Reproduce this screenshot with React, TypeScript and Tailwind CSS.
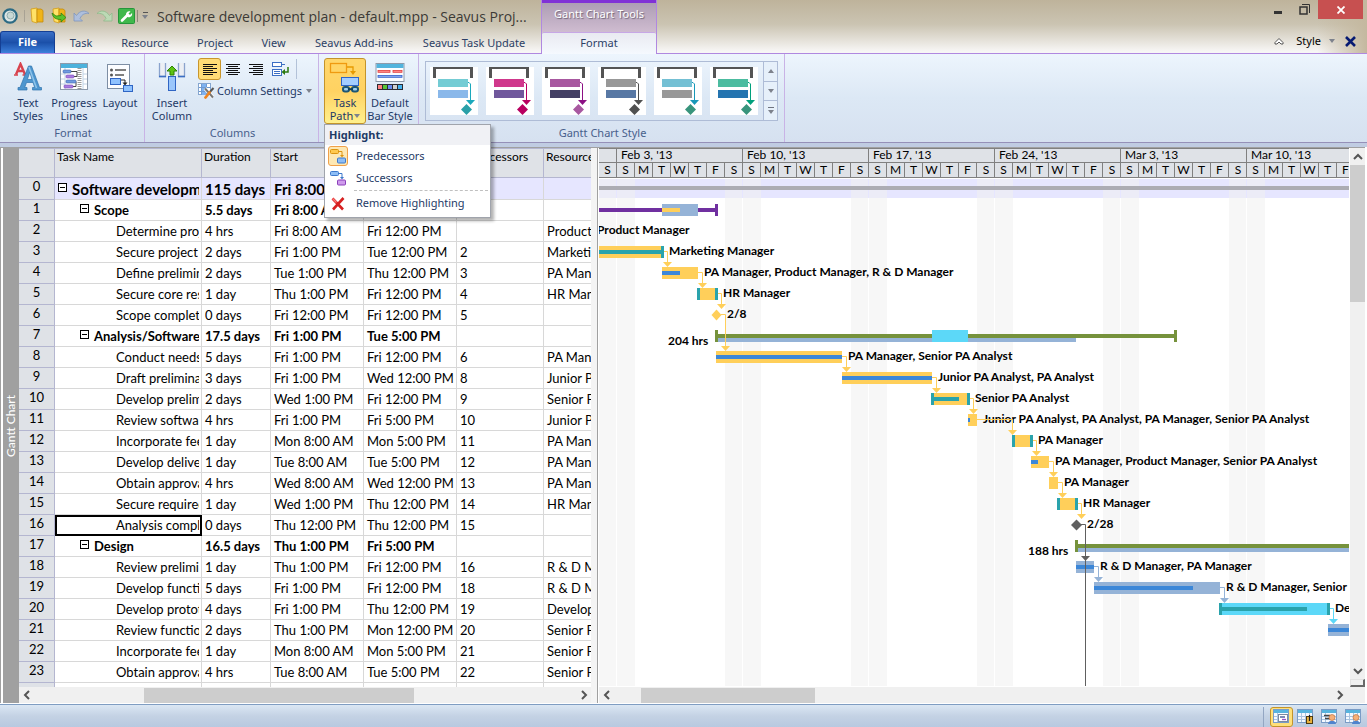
import React from "react";

/* ---------- data ---------- */

type Task = {
  level: 0 | 1 | 2;
  name: string;
  duration: string;
  start: string;
  finish: string;
  pred: string;
  res: string;
};

const t = (level: 0 | 1 | 2, name: string, duration: string, start: string, finish: string, pred = "", res = ""): Task => ({
  level, name, duration, start, finish, pred, res,
});

const tasks: Task[] = [
  t(0, "Software development", "115 days", "Fri 8:00 AM", ""),
  t(1, "Scope", "5.5 days", "Fri 8:00 AM", ""),
  t(2, "Determine project scope", "4 hrs", "Fri 8:00 AM", "Fri 12:00 PM", "", "Product Manager"),
  t(2, "Secure project sponsorship", "2 days", "Fri 1:00 PM", "Tue 12:00 PM", "2", "Marketing Manager"),
  t(2, "Define preliminary resources", "2 days", "Tue 1:00 PM", "Thu 12:00 PM", "3", "PA Manager"),
  t(2, "Secure core resources", "1 day", "Thu 1:00 PM", "Fri 12:00 PM", "4", "HR Manager"),
  t(2, "Scope complete", "0 days", "Fri 12:00 PM", "Fri 12:00 PM", "5"),
  t(1, "Analysis/Software Requirements", "17.5 days", "Fri 1:00 PM", "Tue 5:00 PM"),
  t(2, "Conduct needs analysis", "5 days", "Fri 1:00 PM", "Fri 12:00 PM", "6", "PA Manager"),
  t(2, "Draft preliminary specifications", "3 days", "Fri 1:00 PM", "Wed 12:00 PM", "8", "Junior PA Analyst"),
  t(2, "Develop preliminary budget", "2 days", "Wed 1:00 PM", "Fri 12:00 PM", "9", "Senior PA Analyst"),
  t(2, "Review software specifications", "4 hrs", "Fri 1:00 PM", "Fri 5:00 PM", "10", "Junior PA Analyst"),
  t(2, "Incorporate feedback", "1 day", "Mon 8:00 AM", "Mon 5:00 PM", "11", "PA Manager"),
  t(2, "Develop delivery timeline", "1 day", "Tue 8:00 AM", "Tue 5:00 PM", "12", "PA Manager"),
  t(2, "Obtain approvals to proceed", "4 hrs", "Wed 8:00 AM", "Wed 12:00 PM", "13", "PA Manager"),
  t(2, "Secure required resources", "1 day", "Wed 1:00 PM", "Thu 12:00 PM", "14", "HR Manager"),
  t(2, "Analysis complete", "0 days", "Thu 12:00 PM", "Thu 12:00 PM", "15"),
  t(1, "Design", "16.5 days", "Thu 1:00 PM", "Fri 5:00 PM"),
  t(2, "Review preliminary specifications", "1 day", "Thu 1:00 PM", "Fri 12:00 PM", "16", "R & D Manager"),
  t(2, "Develop functional specifications", "5 days", "Fri 1:00 PM", "Fri 12:00 PM", "18", "R & D Manager"),
  t(2, "Develop prototype", "4 days", "Fri 1:00 PM", "Thu 12:00 PM", "19", "Developer"),
  t(2, "Review functional specifications", "2 days", "Thu 1:00 PM", "Mon 12:00 PM", "20", "Senior PA Analyst"),
  t(2, "Incorporate feedback", "1 day", "Mon 8:00 AM", "Mon 5:00 PM", "21", "Senior PA Analyst"),
  t(2, "Obtain approval to proceed", "4 hrs", "Tue 8:00 AM", "Tue 5:00 PM", "22", "Senior PA Analyst"),
];

const ORANGE = "#ffcf5a";
const TEAL = "#2aa3ac";
const BLUE = "#3c87d8";
const STEEL = "#95b3d7";
const CYAN = "#5cd8f8";
const GREEN = "#76923c";
const GRAY = "#606060";

type Bar = { row: number; x: number; end: number; fill: string; done?: number; doneFill?: string; caps?: boolean };
const bars: Bar[] = [
  { row: 3, x: -10, end: 65, fill: ORANGE, done: 65, doneFill: TEAL, caps: true },
  { row: 4, x: 63, end: 99, fill: ORANGE, done: 81, doneFill: BLUE },
  { row: 5, x: 98, end: 119, fill: ORANGE, caps: true },
  { row: 8, x: 117, end: 243, fill: ORANGE, done: 243, doneFill: BLUE },
  { row: 9, x: 243, end: 333, fill: ORANGE, done: 333, doneFill: BLUE },
  { row: 10, x: 332, end: 371, fill: ORANGE, done: 360, doneFill: TEAL, caps: true },
  { row: 11, x: 369, end: 378, fill: ORANGE, done: 371, doneFill: BLUE },
  { row: 12, x: 413, end: 434, fill: ORANGE, caps: true },
  { row: 13, x: 432, end: 450, fill: ORANGE, done: 439, doneFill: BLUE },
  { row: 14, x: 450, end: 459, fill: ORANGE },
  { row: 15, x: 458, end: 479, fill: ORANGE, caps: true },
  { row: 18, x: 477, end: 495, fill: STEEL, done: 495, doneFill: BLUE },
  { row: 19, x: 495, end: 621, fill: STEEL, done: 594, doneFill: BLUE },
  { row: 20, x: 620, end: 731, fill: CYAN, done: 708, doneFill: TEAL, caps: true },
  { row: 21, x: 729, end: 800, fill: STEEL, done: 800, doneFill: BLUE },
];

type Link = { row: number; from: number; to: number; color: string; rows?: number };
const links: Link[] = [
  { row: 3, from: 65, to: 68, color: ORANGE },
  { row: 4, from: 99, to: 103, color: ORANGE },
  { row: 5, from: 119, to: 122, color: ORANGE },
  { row: 6, from: 122, to: 126, color: ORANGE, rows: 2 },
  { row: 8, from: 243, to: 247, color: ORANGE },
  { row: 9, from: 333, to: 337, color: ORANGE },
  { row: 10, from: 371, to: 374, color: ORANGE },
  { row: 11, from: 378, to: 413, color: ORANGE },
  { row: 12, from: 434, to: 437, color: ORANGE },
  { row: 13, from: 450, to: 454, color: ORANGE },
  { row: 14, from: 459, to: 463, color: ORANGE },
  { row: 15, from: 479, to: 482, color: ORANGE },
  { row: 16, from: 482, to: 486, color: GRAY, rows: 2 },
  { row: 18, from: 495, to: 499, color: STEEL },
  { row: 19, from: 621, to: 625, color: STEEL },
  { row: 20, from: 731, to: 734, color: CYAN },
];

const labels: { row: number; x: number; text: string; drop?: boolean }[] = [
  { row: 2, x: -2, text: "Product Manager" },
  { row: 3, x: 70, text: "Marketing Manager" },
  { row: 4, x: 105, text: "PA Manager, Product Manager, R & D Manager" },
  { row: 5, x: 124, text: "HR Manager" },
  { row: 6, x: 128, text: "2/8" },
  { row: 7, x: 69, text: "204 hrs", drop: true },
  { row: 8, x: 249, text: "PA Manager, Senior PA Analyst" },
  { row: 9, x: 339, text: "Junior PA Analyst, PA Analyst" },
  { row: 10, x: 376, text: "Senior PA Analyst" },
  { row: 11, x: 384, text: "Junior PA Analyst, PA Analyst, PA Manager, Senior PA Analyst" },
  { row: 12, x: 439, text: "PA Manager" },
  { row: 13, x: 456, text: "PA Manager, Product Manager, Senior PA Analyst" },
  { row: 14, x: 465, text: "PA Manager" },
  { row: 15, x: 484, text: "HR Manager" },
  { row: 16, x: 488, text: "2/28" },
  { row: 17, x: 429, text: "188 hrs", drop: true },
  { row: 18, x: 501, text: "R & D Manager, PA Manager" },
  { row: 19, x: 627, text: "R & D Manager, Senior" },
  { row: 20, x: 736, text: "Developer" },
];

const weeks = ["Feb 3, '13", "Feb 10, '13", "Feb 17, '13", "Feb 24, '13", "Mar 3, '13", "Mar 10, '13"];
const dayLetters = ["S", "M", "T", "W", "T", "F", "S"];
const styles = [
  ["#74ccd4", "#8ab8ea", "#1aa8bc", "#2aa0a8"],
  ["#d0388c", "#70589c", "#b80060", "#b80060"],
  ["#a858a0", "#444064", "#8c1084", "#a858a0"],
  ["#989898", "#5878a4", "#505050", "#505050"],
  ["#74c0d4", "#989898", "#1898b8", "#38947c"],
  ["#4cbca0", "#2474b0", "#00a07c", "#38947c"],
];

const rowTop = (row: number) => 1 + row * 21;

/* ---------- small drawings ---------- */

const Caret = ({ up = false }: { up?: boolean }) => (
  <svg width="6" height="4" viewBox="0 0 6 4" className="shrink-0">
    <path d={up ? "M0 4h6L3 0z" : "M0 0h6L3 4z"} fill="#7d828c" />
  </svg>
);

const Chevron = ({ dir }: { dir: "l" | "r" | "u" | "d" }) => {
  const d = { l: "M7 1L3 5l4 4", r: "M3 1l4 4-4 4", u: "M1 7l4-4 4 4", d: "M1 3l4 4 4-4" }[dir];
  return (
    <svg width="10" height="10" viewBox="0 0 10 10">
      <path d={d} fill="none" stroke="#555" strokeWidth="2" />
    </svg>
  );
};

const TextStylesIcon = () => (
  <svg width="28" height="30" viewBox="0 0 28 30">
    <g fill="none" stroke="#d8434e" strokeWidth="2.4">
      <path d="M2 12.500L6.500 2L11 12.500M3.500 9h6" />
      <path d="M0 13h4M8.500 13h4" strokeWidth="1.500" />
    </g>
    <path d="M14.500 4h3l8 21.500h2V28h-9v-2.500h2.200l-1.700-5h-6.500l-1.800 5H13V28H4v-2.500h2z M13.400 17.500h4.600L15.800 10z" fill="#4e96cf" stroke="#2f74ae" strokeWidth=".7" />
    <path d="M15 5l7.500 21" stroke="#8fc4ea" strokeWidth="1.500" />
  </svg>
);

const ProgressIcon = () => (
  <svg width="28" height="30" viewBox="0 0 28 30">
    <rect x=".5" y="1.500" width="27" height="26" fill="#fff" stroke="#8d9aab" />
    <rect x="1" y="2" width="26" height="4" fill="#4db2dc" />
    <path d="M5 6v21M1 12h4M1 17h4M1 22h4M23 6v21M23 12h4M23 17h4M23 22h4" stroke="#c2d4e6" />
    <path d="M19.500 6v21" stroke="#9a9a9a" strokeWidth="4" strokeDasharray="1 1" />
    <path d="M11 9.500h6v5h-6M11 19.500h5v5h-4M10 14.500h6" fill="none" stroke="#444" />
    <g fill="#6f9be0" stroke="#3f67ad" strokeWidth=".6">
      <rect x="3" y="8" width="8" height="3" rx="1" />
      <rect x="6" y="18" width="10" height="3" rx="1" />
    </g>
    <g fill="#a97be0" stroke="#7a49b8" strokeWidth=".6">
      <rect x="6" y="13" width="8" height="3" rx="1" />
      <rect x="4" y="23" width="9" height="3" rx="1" />
    </g>
  </svg>
);

const LayoutIcon = () => (
  <svg width="28" height="30" viewBox="0 0 28 30">
    <rect x="1.500" y="2.500" width="22" height="24" fill="#fcfdff" stroke="#7d8ea4" />
    <g fill="#555"><circle cx="5.500" cy="8" r="1.500" /><circle cx="5.500" cy="13" r="1.500" /></g>
    <path d="M9 8h11M9 13h9" stroke="#555" strokeWidth="1.300" />
    <rect x="4.500" y="16.500" width="10" height="6" fill="#8fc2ff" stroke="#2f65c4" />
    <path d="M15 18h4v4" fill="none" stroke="#222" /><path d="M16.500 20.500h5L19 23.500z" fill="#222" />
    <rect x="17.500" y="23.500" width="9" height="6" fill="#8fc2ff" stroke="#2f65c4" />
  </svg>
);

const InsertIcon = () => (
  <svg width="28" height="30" viewBox="0 0 28 30">
    <path d="M1.500 1v13.500h6V1M20.500 1v13.500h6V1" fill="#eceff4" stroke="#8aa3cd" strokeWidth="1.300" />
    <path d="M1 14.500h7M20 14.500h7" stroke="#3c6fc4" strokeWidth="1.600" />
    <rect x="10.500" y="14.500" width="7" height="14" fill="#9ac6fb" stroke="#2f65c4" />
    <path d="M14 4l5 5h-3v4h-4V9H9z" fill="#5cc413" stroke="#2d8206" />
  </svg>
);

const TaskPathIcon = () => (
  <svg width="32" height="32" viewBox="0 0 32 32">
    <rect x="1.500" y="1.500" width="16" height="9" fill="#ffd566" stroke="#ef9a10" strokeWidth="1.300" />
    <path d="M18 5h6v5" fill="none" stroke="#e79a00" strokeWidth="1.300" /><path d="M21 9h6l-3 4z" fill="#e79a00" />
    <rect x="12.500" y="15.500" width="17" height="8" fill="#a3cdff" stroke="#2f65c4" />
    <g fill="#9fd0ef" stroke="#1c5675" strokeWidth="2"><rect x="14" y="25" width="6" height="4.500" rx="2" /><rect x="23" y="25" width="6" height="4.500" rx="2" /></g>
    <path d="M19 27.200h5" stroke="#0f3f5a" strokeWidth="2" />
  </svg>
);

const BarStyleIcon = () => (
  <svg width="30" height="30" viewBox="0 0 30 30">
    <rect x="1" y="1.500" width="28" height="18" fill="#fbfdff" stroke="#8d9aab" />
    <rect x="1.500" y="2" width="27" height="4" fill="#52b4dd" />
    <g fill="#ff8c8c" stroke="#e23b3b" strokeWidth=".8"><rect x="3" y="8.500" width="12" height="1.800" /><rect x="18" y="8.500" width="9" height="1.800" /></g>
    <rect x="3" y="13.500" width="24" height="1.800" fill="#8aaef2" stroke="#2e5ecc" strokeWidth=".8" />
    <rect x="2" y="22" width="26" height="6" fill="#2b2b33" />
    {["#ff8080", "#58c437", "#6a8cf0", "#d0d0d0", "#45b2ec"].map((c, i) => (
      <rect key={i} x={3 + i * 5} y="23" width="4" height="4" fill={c} />
    ))}
  </svg>
);

const LinkIcon = ({ a, b, sa, sb }: { a: string; b: string; sa: string; sb: string }) => (
  <svg width="18" height="16" viewBox="0 0 18 16">
    <rect x="1.500" y="1.500" width="8" height="4" rx="1" fill={a} stroke={sa} />
    <path d="M10 3.500h3V8" fill="none" stroke={sa} /><path d="M11 7h4l-2 2.500z" fill={sa} />
    <rect x="8.500" y="10" width="8" height="5" rx="1" fill={b} stroke={sb} />
  </svg>
);

const GridToolIcon = () => (
  <svg width="17" height="16" viewBox="0 0 17 16" className="shrink-0">
    <rect x=".5" y=".5" width="12" height="11" fill="#fff" stroke="#86a6cf" />
    <rect x="4" y="1" width="4" height="11" fill="#7fb2f0" />
    <path d="M1 4.500h12M1 8.500h12M3.500 1v11M8.500 1v11" stroke="#6f9ad0" />
    <path d="M7 5.500l8 9" stroke="#fff" strokeWidth="3.500" /><path d="M7 5.500l8 9" stroke="#777" strokeWidth="2" />
    <path d="M15.500 5l-4.500 5" stroke="#555" strokeWidth="2" /><path d="M11.500 9.500L7.500 14.500" stroke="#ee8420" strokeWidth="2.800" strokeLinecap="round" />
  </svg>
);

const AlignIcon = ({ kind }: { kind: "l" | "c" | "r" }) => {
  const short = { l: "M0", c: "M2", r: "M4" }[kind];
  return (
    <svg width="14" height="11" viewBox="0 0 14 11">
      <path d={`M0 .5h14M0 4.500h14M0 8.500h14${short} 2.500h10${short} 6.500h10${short} 10.500h10`} stroke="#111" />
    </svg>
  );
};

const WrapIcon = () => (
  <svg width="17" height="15" viewBox="0 0 17 15">
    <rect x=".5" y=".5" width="9" height="4" fill="#fff" stroke="#3c6fc4" /><path d="M10 2.500h3" stroke="#3c6fc4" />
    <rect x=".5" y="7.500" width="9" height="6" fill="#fff" stroke="#3c6fc4" /><path d="M2 9.500h6M2 11.500h6" stroke="#3c6fc4" />
    <path d="M16 5v5h-4" fill="none" stroke="#2d7a10" strokeWidth="1.500" /><path d="M13 7v6l-3.500-3z" fill="#2d7a10" />
  </svg>
);

const FolderIcon = ({ arrow = false }: { arrow?: boolean }) => (
  <svg width="16" height="18" viewBox="0 0 16 18">
    <path d="M2 2l6-1v15l-5-1.500z" fill="#ffe267" stroke="#d39b14" strokeWidth=".8" />
    <path d="M8 2h4l2 1.500V15H8z" fill="#f0b418" stroke="#c28a0d" strokeWidth=".8" />
    {arrow && <path d="M1 6l4 3 5-.5V6l5 4.500-5 4.500v-2.500C5 12.500 2 11 1 6z" fill="#5ac22a" stroke="#27770c" strokeWidth=".7" />}
  </svg>
);

const UndoIcon = ({ flip = false }: { flip?: boolean }) => (
  <svg width="17" height="14" viewBox="0 0 17 14">
    <g transform={flip ? "translate(17 0) scale(-1 1)" : undefined}>
      <path d="M1 12V4l2.500 2.500C7 1 13 1 16 4.500 12 4 9 5 7 9.500L9.500 12z" fill={flip ? "#bcd9b5" : "#aebfdc"} stroke={flip ? "#8fb98a" : "#7f95bd"} strokeWidth=".8" />
    </g>
  </svg>
);

const ViewIcon = ({ kind }: { kind: number }) => (
  <svg width="17" height="15" viewBox="0 0 17 15">
    <rect x=".5" y=".5" width="15" height="13" fill="#f4f9ff" stroke="#7a9cc6" />
    <rect x="1" y="1" width="14" height="3" fill="#56b4de" />
    <path d="M4.500 4v9M1 7.500h14M1 10.500h14" stroke="#a9c4e0" />
    {kind === 0 && <g><rect x="5.500" y="5.500" width="9" height="7" fill="#fff" stroke="#7a8aa0" /><path d="M7 8h5" stroke="#334d90" strokeWidth="1.300" /><path d="M9 10.500h4" stroke="#9a4fc8" strokeWidth="1.300" /></g>}
    {kind === 1 && <g><path d="M8.500 4v9M12.500 4v9" stroke="#a9c4e0" /><rect x="9.500" y="7.500" width="6" height="7" fill="#e8b23c" stroke="#4c3a13" /><path d="M12.500 6v6" stroke="#222" strokeWidth="1.200" /></g>}
    {kind === 2 && <path d="M3 6.500h6M4 9.500h5" stroke="#444" strokeWidth="1.300" />}
    {kind === 3 && <path d="M8.500 4v9M12.500 4v9" stroke="#a9c4e0" />}
    {kind >= 2 && <g><path d="M7 15c0-4.500 8-4.500 8 0z" fill="#4f83cd" /><circle cx="11" cy="8.500" r="3" fill="#f5b07a" stroke="#b8642f" strokeWidth=".6" /></g>}
  </svg>
);

/* ---------- page parts ---------- */

const tabs = [
  ["Task", "w-[52px]"],
  ["Resource", "w-[76px]"],
  ["Project", "w-[64px]"],
  ["View", "w-[53px]"],
  ["Seavus Add-ins", "w-[108px]"],
  ["Seavus Task Update", "w-[132px]"],
];

const TitleArea = () => (
  <header className="flex h-[54px] shrink-0 bg-linear-to-b from-[#beb39b] via-[#cbc4b2] via-45% to-[#f7f6f5] to-95%">
    <div className="flex w-[541px] shrink-0 flex-col border-b border-[#b088e0]">
      <div className="flex h-[31px] items-center">
        <div className="flex w-[157px] shrink-0 items-center">
          <svg width="18" height="18" viewBox="0 0 18 18" className="ml-px">
            <circle cx="9" cy="9" r="6.700" fill="#dce5e4" stroke="#2b6a84" strokeWidth="2.200" />
            <circle cx="9.500" cy="8.500" r="3.500" fill="#c9d9d6" stroke="#90aeb0" />
          </svg>
          <i className="ml-[5px] mr-[4px] h-3 w-px bg-[#a8a294]" />
          <button aria-label="Open" className="mr-[6px]"><FolderIcon /></button>
          <button aria-label="Open from server" className="mr-[6px]"><FolderIcon arrow /></button>
          <button aria-label="Undo" className="mr-[6px]"><UndoIcon /></button>
          <button aria-label="Redo" className="mr-[5px]"><UndoIcon flip /></button>
          <button aria-label="Tools">
            <svg width="17" height="16" viewBox="0 0 17 16">
              <rect x=".5" y=".5" width="16" height="15" rx="1" fill="#3fb84b" stroke="#25963a" />
              <path d="M4 12.500l5-5" stroke="#fff" strokeWidth="2.600" strokeLinecap="round" />
              <path d="M8 7.500c-.5-3 2-5 4.500-4L10.500 5.500l1.500 1.500L14 5c.8 2.500-1.500 5-4.500 4z" fill="#fff" />
            </svg>
          </button>
          <i className="ml-[2px] mr-1 h-3 w-px bg-[#8f897c]" />
          <button aria-label="Customize" className="flex flex-col items-center gap-[2px]">
            <i className="h-px w-[5px] bg-[#555]" /><Caret />
          </button>
        </div>
        <h1 className="whitespace-nowrap pt-[2px] font-['Open_Sans',sans-serif] text-[14px] leading-5 text-[#3c3a36]">Software development plan - default.mpp - Seavus Proj...</h1>
      </div>
      <nav className="flex flex-1 text-[11px] text-[#2c3f66]">
        <button className="w-[55px] rounded-t-[3px] border border-b-0 border-[#153f94] bg-linear-to-b from-[#3a6fc6] via-[#1b50a9] to-[#3d80dc] font-bold text-white">File</button>
        {tabs.map(([label, w]) => (
          <button key={label} className={`${w} whitespace-nowrap pt-[2px]`}>{label}</button>
        ))}
      </nav>
    </div>
    <div className="flex w-[116px] shrink-0 flex-col border-x border-[#b088e0] text-[11px]">
      <div className="flex h-8 items-center justify-center border-t-[3px] border-[#8031d6] bg-linear-to-b from-[#ad9db4] to-[#cfbcd0] pb-[6px] text-white [text-shadow:1px_1px_1px_#6d6274]">Gantt Chart Tools</div>
      <button className="flex-1 rounded-t-[2px] border-t border-[#c7a7e6] bg-linear-to-b from-[#e9eaf1] to-[#f5f9fe] text-[#2c3f66]">Format</button>
    </div>
    <div className="flex min-w-0 flex-1 flex-col justify-between border-b border-[#b088e0] bg-linear-to-r from-transparent from-93% to-[#c4b89f]">
      <div className="flex justify-end pr-[4px]">
        <button aria-label="Minimize" className="flex h-[19px] w-7 items-center justify-center"><i className="mt-[5px] h-[3px] w-2 bg-[#333]" /></button>
        <button aria-label="Restore" className="flex h-[19px] w-6 items-center justify-center">
          <svg width="11" height="11" viewBox="0 0 11 11"><path d="M3 .5h7.500V9" fill="none" stroke="#333" /><rect x="1" y="3" width="7" height="7" fill="none" stroke="#333" strokeWidth="1.500" /></svg>
        </button>
        <button aria-label="Close" className="ml-[2px] flex h-[19px] w-[45px] items-center justify-center bg-[#c75050]">
          <svg width="8" height="8" viewBox="0 0 8 8"><path d="M.5.5l7 7M7.500.5l-7 7" stroke="#fff" strokeWidth="1.800" /></svg>
        </button>
      </div>
      <div className="flex h-6 items-center justify-end pr-[11px] text-[11px] text-black">
        <button aria-label="Collapse ribbon" className="mr-3">
          <svg width="10" height="8" viewBox="0 0 10 8"><path d="M1 5.500L5 1.500l4 4V7H7L5 5 3 7H1z" fill="#fff" stroke="#555" /></svg>
        </button>
        <button className="flex items-center gap-2">Style <Caret /></button>
        <button aria-label="Close document" className="ml-[10px]">
          <svg width="11" height="11" viewBox="0 0 11 11"><path d="M1 1l9 9M10 1l-9 9" stroke="#061a72" strokeWidth="2.600" /></svg>
        </button>
      </div>
    </div>
  </header>
);

const BigButton = ({ icon, lines, w = "w-[46px]" }: { icon: React.ReactNode; lines: string[]; w?: string }) => (
  <button className={`flex ${w} shrink-0 flex-col items-center pt-[3px] leading-[13px]`}>
    <span className="flex h-[35px] items-start pt-px">{icon}</span>
    {lines.map((l) => <span key={l} className="whitespace-nowrap">{l}</span>)}
  </button>
);

const Group = ({ title, w, children }: { title: string; w: string; children: React.ReactNode }) => (
  <section className={`flex ${w} shrink-0 flex-col border-r border-[#c9b3e6]`}>
    <div className="flex flex-1 items-start pt-1">{children}</div>
    <h2 className="h-[18px] pl-[2px] text-center leading-[18px] text-[#48608c]">{title}</h2>
  </section>
);

const HighlightMenu = () => (
  <div role="menu" className="absolute left-0 top-[66px] z-10 w-[167px] border border-[#a0a4ac] bg-white pb-px text-left text-[11px] text-[#1e3a66] shadow-[3px_3px_3px_rgba(0,0,0,0.3)]">
    <div className="h-5 bg-[#f0f1f5] pl-1 font-bold leading-[19px]">Highlight:</div>
    <div className="flex flex-col pl-[3px]">
      <button role="menuitem" className="flex h-[22px] items-center gap-2">
        <span className="flex h-5 w-5 items-center justify-center rounded-[3px] border border-[#f0a04a] bg-[#fde8b4]"><LinkIcon a="#ffc94f" sa="#dc9410" b="#8dbdf5" sb="#3c78cc" /></span>Predecessors
      </button>
      <button role="menuitem" className="flex h-[22px] items-center gap-2">
        <span className="flex w-5 justify-center"><LinkIcon a="#8dbdf5" sa="#3c78cc" b="#cf9bec" sb="#8a3fba" /></span>Successors
      </button>
      <i className="ml-[26px] mr-[2px] mt-px border-t border-dashed border-[#c0c0c0]" />
      <button role="menuitem" className="flex h-[25px] items-center gap-2">
        <span className="flex w-5 justify-center"><svg width="14" height="14" viewBox="0 0 14 14"><path d="M1.500 1.500l10.500 11M12.500 1L2 12.500" stroke="#d62020" strokeWidth="2.600" /><path d="M1.500 1.500l4 4" stroke="#f77" strokeWidth="1.500" /></svg></span>Remove Highlighting
      </button>
    </div>
  </div>
);

const Thumb = ({ c }: { c: string[] }) => (
  <svg width="48" height="48" viewBox="0 0 48 48">
    <rect width="48" height="48" fill="#fff" />
    <path d="M3 0h40v11h-3V2H6v9H3z" fill="#545454" />
    <rect x="8" y="12" width="30" height="8" fill={c[0]} /><rect x="8" y="23" width="30" height="8" fill={c[1]} />
    <path d="M38 15.500h1l1.500 1.500v17" fill="none" stroke={c[2]} /><path d="M36 33h9l-4.500 5z" fill={c[2]} />
    <path d="M36.500 37l5.500 5.500-5.500 5.500-5.500-5.500z" fill={c[3]} />
  </svg>
);

const Ribbon = () => (
  <div className="flex h-[89px] shrink-0 border-b border-[#9590b8] bg-linear-to-b from-[#edf5fd] via-[#dce8f5] via-50% to-[#d6e1f0] text-[11px] text-[#1e3966]">
    <Group title="Format" w="w-[145px]">
      <div className="flex pl-[5px]">
        <BigButton icon={<TextStylesIcon />} lines={["Text", "Styles"]} />
        <BigButton icon={<ProgressIcon />} lines={["Progress", "Lines"]} />
        <BigButton icon={<LayoutIcon />} lines={["Layout"]} />
      </div>
    </Group>
    <Group title="Columns" w="w-[174px]">
      <div className="flex pl-1">
        <BigButton icon={<InsertIcon />} lines={["Insert", "Column"]} />
        <div className="ml-[3px] flex flex-col">
          <div className="flex items-center">
            <button aria-label="Align left" className="flex h-[22px] w-[23px] items-center justify-center rounded-[3px] border border-[#c8962d] bg-[#ffdc76]"><AlignIcon kind="l" /></button>
            <button aria-label="Center" className="flex w-[23px] justify-center"><AlignIcon kind="c" /></button>
            <button aria-label="Align right" className="flex w-6 justify-center"><AlignIcon kind="r" /></button>
            <button aria-label="Wrap text" className="flex w-6 justify-center"><WrapIcon /></button>
            <i className="ml-1 h-5 w-px bg-[#b3c2d8]" />
          </div>
          <button className="flex h-[22px] items-center gap-[2px] whitespace-nowrap"><GridToolIcon />Column Settings <span className="pl-[2px]"><Caret /></span></button>
        </div>
      </div>
    </Group>
    <section className="flex w-[100px] shrink-0 border-r border-[#c9b3e6] pl-[5px] pt-1">
      <div className="relative">
        <button aria-haspopup="menu" className="flex h-[66px] w-[42px] flex-col items-center rounded-[3px] border border-[#c3942c] bg-linear-to-b from-[#ffd76b] via-[#ffd262] to-[#fff08c] pt-[2px] leading-[13px]">
          <span className="flex h-[35px] items-start pt-px"><TaskPathIcon /></span>
          <span>Task</span>
          <span className="flex items-center gap-px">Path <Caret /></span>
        </button>
        <HighlightMenu />
      </div>
      <BigButton icon={<BarStyleIcon />} lines={["Default", "Bar Style"]} w="w-[48px]" />
    </section>
    <Group title="Gantt Chart Style" w="w-[366px]">
      <div className="ml-[6px] mt-[3px] flex h-[60px] border border-[#aebcd6]">
        <div className="flex items-center gap-2 px-1 pr-[5px]">
          {styles.map((c, i) => <button key={i} aria-label={`Gantt style ${i + 1}`}><Thumb c={c} /></button>)}
        </div>
        <div className="flex w-[14px] flex-col divide-y divide-[#aebcd6] border-l border-[#aebcd6] bg-[#e6f0fa]">
          <button aria-label="Scroll styles up" className="flex flex-1 items-center justify-center"><Caret up /></button>
          <button aria-label="Scroll styles down" className="flex flex-1 items-center justify-center"><Caret /></button>
          <button aria-label="More styles" className="flex flex-1 flex-col items-center justify-center gap-[2px]"><i className="h-px w-[6px] bg-[#6f7480]" /><Caret /></button>
        </div>
      </div>
    </Group>
  </div>
);

const columns = [
  ["Task Name", "w-[147px]"],
  ["Duration", "w-[69px]"],
  ["Start", "w-[93px]"],
  ["Finish", "w-[93px]"],
  ["Predecessors", "w-[87px]"],
  ["Resource Names", "w-[90px]"],
];

const cell = "overflow-hidden whitespace-nowrap border-b border-r border-[#d8d8d8] p-0 pl-[3px] align-middle leading-4";

const HScroll = ({ before, thumb }: { before: string; thumb: string }) => (
  <div className="flex h-4 shrink-0 items-center justify-between bg-[#f0f0f0] pr-[2px]">
    <div className="flex h-full items-center">
      <button aria-label="Scroll left" className={`${before} pl-[3px]`}><Chevron dir="l" /></button>
      <i className={`h-[15px] ${thumb} bg-[#cdcdcd]`} />
    </div>
    <button aria-label="Scroll right"><Chevron dir="r" /></button>
  </div>
);

const TaskTable = () => (
  <div className="flex w-[572px] shrink-0 flex-col">
    <div className="min-h-0 flex-1 overflow-hidden bg-white">
      <table className="w-[615px] table-fixed border-separate border-spacing-0 text-[13px] text-black">
        <thead>
          <tr className="h-[30px] bg-[#dfe2e7] text-left align-top text-xs">
            <th className="w-[36px] border-b border-r border-t border-[#b4b6d0] p-0" />
            {columns.map(([c, w]) => (
              <th key={c} className={`${w} whitespace-nowrap border-b border-r border-t border-[#b4b6d0] p-0 pl-[2px] font-normal leading-[15px]`}>{c}</th>
            ))}
          </tr>
        </thead>
        <tbody>
          {tasks.map((task, i) => (
            <tr key={i} className={i === 0 ? "h-[22px] bg-[#e6e6ff] text-[15px] font-bold" : task.level === 1 ? "h-[21px] font-bold" : "h-[21px]"}>
              <th className="border-b border-r border-[#b4b6d0] bg-[#dfe2e7] p-0 align-top text-[13px] font-normal leading-4">{i}</th>
              <td className={`${cell} ${i === 16 ? "outline-2 -outline-offset-2 outline-black" : ""}`}>
                <div className={`mr-[2px] flex items-center overflow-hidden ${task.level === 2 ? "pl-[58px]" : task.level === 1 ? "pl-[22px]" : ""}`}>
                  {task.level < 2 && (
                    <svg width="9" height="9" viewBox="0 0 9 9" className="mb-[3px] mr-[5px] shrink-0"><rect x=".5" y=".5" width="8" height="8" fill="#fff" stroke="#000" /><path d="M2 4.500h5" stroke="#000" /></svg>
                  )}
                  <span>{task.name}</span>
                </div>
              </td>
              <td className={cell}>{task.duration}</td>
              <td className={cell}>{task.start}</td>
              <td className={cell}>{task.finish}</td>
              <td className={cell}>{task.pred}</td>
              <td className={cell}>{task.res}</td>
            </tr>
          ))}
          <tr className="h-[21px]">
            <th className="border-r border-[#b4b6d0] bg-[#dfe2e7]" />
            {columns.map(([c]) => <td key={c} className="border-r border-[#d8d8d8]" />)}
          </tr>
        </tbody>
      </table>
    </div>
    <HScroll before="w-[125px]" thumb="w-[270px]" />
  </div>
);

const Chart = () => (
  <svg className="block h-full w-full font-['Lato',sans-serif]" aria-label="Gantt chart">
    <rect y="1" width="100%" height="19" fill="#e6e6ff" />
    {[-1, 0, 1, 2, 3, 4, 5].map((w) => (
      <g key={w} fill="#f0f0f0" fillOpacity=".55">
        <rect x={w * 126 + 126} y="1" width="17" height="507" />
        <rect x={w * 126 + 144} y="1" width="18" height="507" />
      </g>
    ))}
    <rect y="8" width="100%" height="4" fill="#acacb4" />
    <g fill="#7030a0"><rect y="30" width="119" height="4" /><rect x="116" y="26" width="3" height="12" /></g>
    <rect x="63" y="26" width="36" height="12" fill={STEEL} /><rect x="63" y="30" width="18" height="4" fill={ORANGE} />
    <rect x="119" y="160" width="358" height="4" fill={STEEL} />
    <path d="M116 152h3v4h456v-4h3v12h-3v-4H119v4h-3z" fill={GREEN} />
    <rect x="333" y="152" width="36" height="12" fill={CYAN} />
    <rect x="479" y="370" width="100%" height="4" fill={STEEL} /><rect x="476" y="366" width="100%" height="4" fill={GREEN} /><rect x="476" y="362" width="3" height="12" fill={GREEN} />
    {bars.map((b) => (
      <g key={b.row} transform={`translate(0 ${rowTop(b.row) + 4})`}>
        <rect x={b.x} width={b.end - b.x} height="12" fill={b.fill} />
        {b.done && <rect x={b.x} y="4" width={b.done - b.x} height="4" fill={b.doneFill} />}
        {b.caps && <g fill={TEAL}><rect x={b.x} width="3" height="12" /><rect x={b.end - 3} width="3" height="12" /></g>}
      </g>
    ))}
    <path d="M117.500 131.500l5 5.500-5 5.500-5-5.500z" fill={ORANGE} />
    <path d="M477.500 341.500l5.500 5.500-5.500 5.500-5.500-5.500z" fill={GRAY} />
    <g fontSize="12" fontWeight="700" fill="#000">
      {labels.map((l) => <text key={l.row} x={l.x} y={rowTop(l.row) + (l.drop ? 19 : 13)}>{l.text}</text>)}
    </g>
    {links.map((l) => {
      const y = rowTop(l.row) + 9;
      const tip = rowTop(l.row + (l.rows ?? 1)) + 3;
      return (
        <g key={l.row}>
          <path d={`M${l.from} ${y + 0.5}H${l.to + 0.5}V${tip}`} fill="none" stroke={l.color} />
          <path d={`M${l.to - 4} ${tip - 4}h9l-4.500 5z`} fill={l.color} />
        </g>
      );
    })}
    <path d="M486.500 380V508" stroke={GRAY} />
  </svg>
);

const GanttPane = () => (
  <div className="flex min-w-0 flex-1 flex-col border-l border-[#a0a0a0] pl-px">
    <div className="flex min-h-0 flex-1">
      <div className="flex min-w-0 flex-1 flex-col overflow-hidden bg-white">
        <div className="flex h-[30px] shrink-0 border-t border-[#808080] bg-[#dfe2e7] text-xs text-black">
          <div className="flex w-[18px] shrink-0 flex-col border-r border-[#808080] text-center">
            <div className="h-[14px] border-b border-[#808080]" />
            <div className="h-[15px] border-b border-[#808080] leading-[13px]">S</div>
          </div>
          {weeks.map((w) => (
            <div key={w} className="flex w-[126px] shrink-0 flex-col border-r border-[#808080]">
              <div className="h-[14px] border-b border-[#808080] pl-1 leading-[11px]">{w}</div>
              <div className="flex h-[15px] border-b border-[#808080] text-center leading-[13px]">
                {dayLetters.map((d, i) => <span key={i} className={`w-[18px] shrink-0 ${i < 6 ? "border-r border-[#808080]" : ""}`}>{d}</span>)}
              </div>
            </div>
          ))}
        </div>
        <div className="min-h-0 flex-1 overflow-hidden"><Chart /></div>
      </div>
      <div className="ml-px flex w-[15px] flex-col items-center bg-[#f0f0f0]">
        <button aria-label="Scroll up" className="flex h-[17px] items-center"><Chevron dir="u" /></button>
        <i className="h-[137px] w-full bg-[#cdcdcd]" />
        <button aria-label="Scroll down" className="mb-[3px] mt-auto"><Chevron dir="d" /></button>
        <i className="h-2 w-full border border-b-2 border-r-2 border-[#e3e3e3] border-b-[#696969] border-r-[#696969] bg-[#f0f0f0]" />
      </div>
    </div>
    <div className="flex">
      <div className="flex-1"><HScroll before="w-[42px]" thumb="w-[174px]" /></div>
      <div className="w-[18px] bg-[#f0f0f0]" />
    </div>
  </div>
);

export default function App() {
  return (
    <div className="flex h-screen min-h-0 flex-col overflow-hidden bg-white font-['Noto_Sans',sans-serif]">
      <TitleArea />
      <Ribbon />
      <main className="flex min-h-0 flex-1 border-t-[4px] border-[#c0cce2] pr-[2px]">
        <div className="mb-px flex min-w-0 flex-1 border-l border-t border-[#a0a0a0] pl-[2px] font-['Lato',sans-serif]">
          <div className="flex w-4 shrink-0 items-center justify-center bg-[#a0a0a0] text-xs leading-4 text-white">
            <span className="rotate-180 whitespace-nowrap [writing-mode:vertical-rl]">Gantt Chart</span>
          </div>
          <TaskTable />
          <i className="w-[6px] shrink-0 bg-[#f4f4f4]" />
          <GanttPane />
        </div>
      </main>
      <footer className="flex h-[23px] shrink-0 items-center justify-end border-t border-[#7f9dc2] bg-linear-to-b from-[#dbe7f4] via-[#c4d2e4] to-[#b8c9e0] pr-[2px] pt-px">
        <i className="mr-[6px] h-5 w-px bg-[#93a6c2]" />
        {["Gantt Chart view", "Task Usage view", "Tracking view", "Resource view"].map((label, k) => (
          <button key={label} aria-label={label} className={k === 0 ? "flex h-5 w-[23px] items-center justify-center rounded-[3px] border border-[#c3942c] bg-[#ffe07a]" : "flex w-6 justify-center"}><ViewIcon kind={k} /></button>
        ))}
      </footer>
    </div>
  );
}
